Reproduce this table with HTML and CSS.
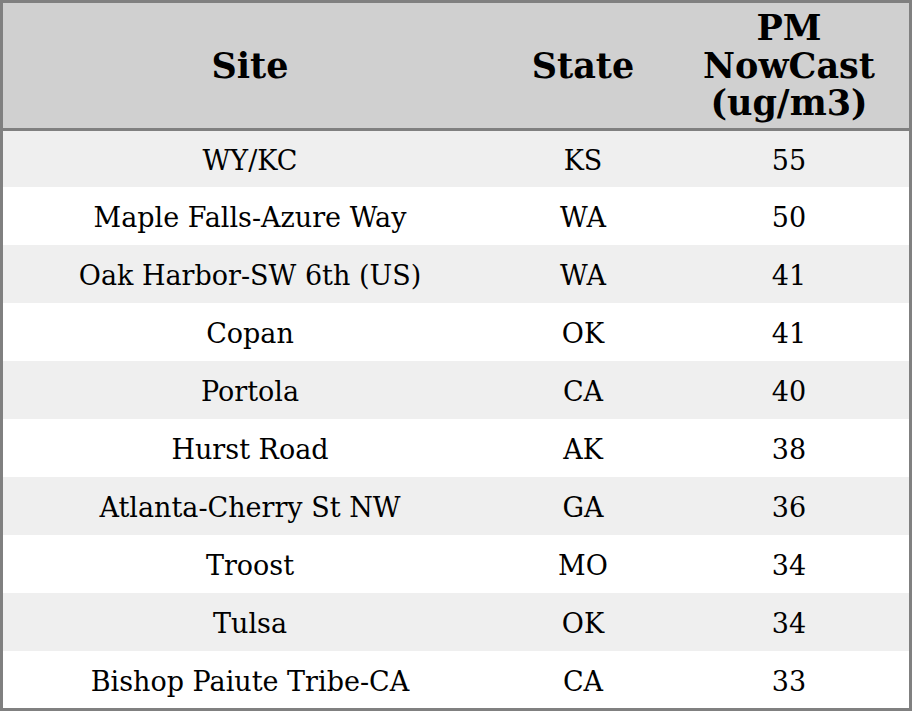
FILE: index.html
```html
<!DOCTYPE html>
<html>
<head>
<meta charset="utf-8">
<link rel="stylesheet" href="styles.css">
</head>
<body>
<table class="aq">
  <colgroup>
    <col class="c-site"><col class="c-state"><col class="c-pm">
  </colgroup>
  <thead>
    <tr><th>Site</th><th>State</th><th>PM<br>NowCast<br>(ug/m3)</th></tr>
  </thead>
  <tbody>
    <tr><td>WY/KC</td><td>KS</td><td>55</td></tr>
    <tr><td>Maple Falls-Azure Way</td><td>WA</td><td>50</td></tr>
    <tr><td>Oak Harbor-SW 6th (US)</td><td>WA</td><td>41</td></tr>
    <tr><td>Copan</td><td>OK</td><td>41</td></tr>
    <tr><td>Portola</td><td>CA</td><td>40</td></tr>
    <tr><td>Hurst Road</td><td>AK</td><td>38</td></tr>
    <tr><td>Atlanta-Cherry St NW</td><td>GA</td><td>36</td></tr>
    <tr><td>Troost</td><td>MO</td><td>34</td></tr>
    <tr><td>Tulsa</td><td>OK</td><td>34</td></tr>
    <tr><td>Bishop Paiute Tribe-CA</td><td>CA</td><td>33</td></tr>
  </tbody>
</table>
</body>
</html>
```
FILE: styles.css
```css
html, body { margin: 0; padding: 0; background: #fff; }
.aq {
  width: 912px;
  border-collapse: separate;
  border-spacing: 0;
  border: 3px solid #808080;
  font-family: "DejaVu Serif", serif;
  color: #000;
  table-layout: fixed;
}
.c-site { width: 494px; }
.c-state { width: 172px; }
.c-pm { width: 240px; }
.aq th {
  background: #d0d0d0;
  font-size: 35px;
  font-weight: bold;
  line-height: 37.5px;
  box-sizing: border-box;
  padding: 0;
  text-align: center;
  vertical-align: middle;
  border-bottom: 3px solid #808080;
}
.aq thead th { height: 128px; }
.aq td {
  font-size: 27px;
  height: 58px;
  box-sizing: border-box;
  padding: 3px 0 0 0;
  text-align: center;
  vertical-align: middle;
}
.aq tbody tr:first-child td { height: 56px; }
.aq tbody tr:last-child td { height: 57px; }
.aq tbody tr:nth-child(odd) { background: #efefef; }
.aq tbody tr:nth-child(even) { background: #fff; }
```
